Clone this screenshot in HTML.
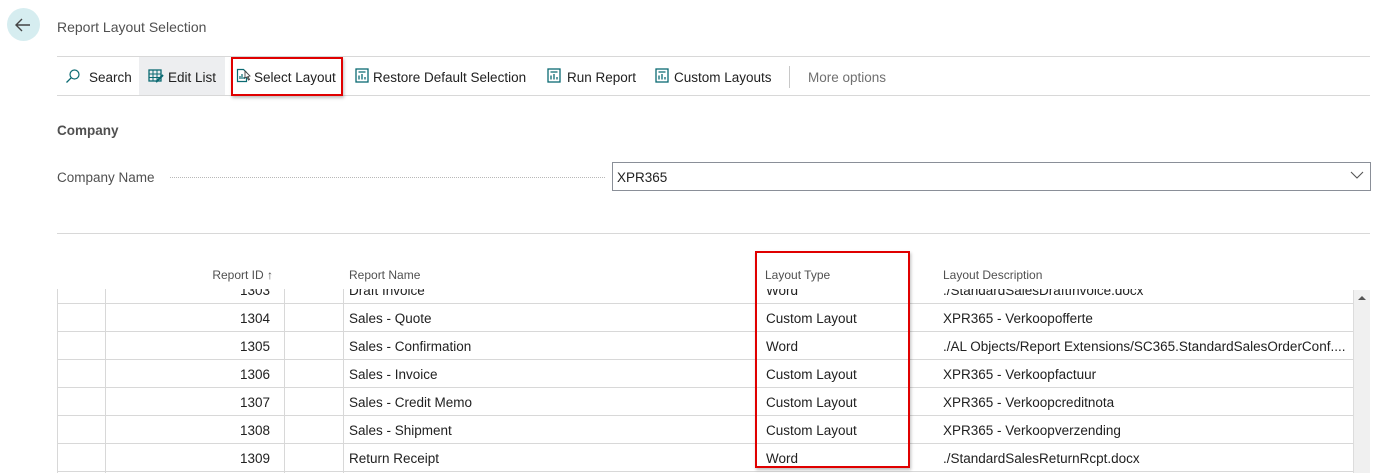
<!DOCTYPE html>
<html><head><meta charset="utf-8">
<style>
*{margin:0;padding:0;box-sizing:border-box}
body{width:1385px;height:473px;overflow:hidden;background:#fff;font-family:"Liberation Sans",sans-serif;color:#212121;position:relative}
.a{position:absolute;white-space:nowrap}
.t{font-size:13.5px;line-height:16px}
.g{color:#505050}
.hl{position:absolute;height:1px;background:#d8d8d8}
.vl{position:absolute;width:1px;background:#d8d8d8}
.red{position:absolute;border:2px solid #e00000;box-shadow:1px 2px 3px rgba(0,0,0,.25)}
svg{position:absolute}
</style></head><body>
<div class="a" style="left:7px;top:8px;width:33px;height:33px;border-radius:50%;background:#d6edf0"></div>
<svg style="left:13px;top:15px" width="20" height="20" viewBox="0 0 20 20"><path d="M17 10H3M9 4L3 10l6 6" fill="none" stroke="#444" stroke-width="1.4"/></svg>
<div class="a t g" style="left:57px;top:19px;font-size:14px">Report Layout Selection</div>
<div class="hl" style="left:57px;top:56px;width:1313px"></div>
<div class="hl" style="left:57px;top:95px;width:1313px"></div>
<div class="a" style="left:139px;top:57px;width:86px;height:38px;background:#edeef0"></div>
<svg style="left:65px;top:68px" width="16" height="16" viewBox="0 0 16 16"><circle cx="9.5" cy="6.5" r="4.5" fill="none" stroke="#0b6a72" stroke-width="1.2"/><path d="M6.3 9.7L1.5 14.5" stroke="#0b6a72" stroke-width="1.3"/></svg>
<div class="a t" style="left:89px;top:70px">Search</div>
<svg style="left:148px;top:68px" width="16" height="16" viewBox="0 0 16 16"><rect x="1" y="2" width="12" height="11" fill="none" stroke="#0b6a72" stroke-width="1.3"/><path d="M1 6h12M1 9.5h12M5 2v11M9 2v11" stroke="#0b6a72" stroke-width="1"/><path d="M8 14l7-7" stroke="#0b6a72" stroke-width="2"/></svg>
<div class="a t" style="left:168px;top:70px">Edit List</div>
<svg style="left:236px;top:67px" width="16" height="17" viewBox="0 0 16 17"><path d="M1.5 2.5h6l3 3v9h-9z" fill="none" stroke="#0b6a72" stroke-width="1.2"/><path d="M4 12V9M6 12V7M8 12v-2" stroke="#0b6a72" stroke-width="1.2"/><path d="M9 4l5 5-2 .5 1.5 3-1 .5-1.5-3L9 11z" fill="#fff" stroke="#444" stroke-width=".9"/></svg>
<div class="a t" style="left:254px;top:70px">Select Layout</div>
<div class="red" style="left:231px;top:57px;width:112px;height:39px"></div>
<svg style="left:355px;top:68px" width="14" height="15" viewBox="0 0 14 15"><rect x="1" y="1" width="12" height="13" fill="none" stroke="#0b6a72" stroke-width="1.3"/><path d="M3.5 4h7M4 11.5V7.5M7 11.5V6M10 11.5V9" stroke="#0b6a72" stroke-width="1.3"/></svg>
<div class="a t" style="left:373px;top:70px">Restore Default Selection</div>
<svg style="left:547px;top:68px" width="14" height="15" viewBox="0 0 14 15"><rect x="1" y="1" width="12" height="13" fill="none" stroke="#0b6a72" stroke-width="1.3"/><path d="M3.5 4h7M4 11.5V7.5M7 11.5V6M10 11.5V9" stroke="#0b6a72" stroke-width="1.3"/></svg>
<div class="a t" style="left:567px;top:70px">Run Report</div>
<svg style="left:655px;top:68px" width="14" height="15" viewBox="0 0 14 15"><rect x="1" y="1" width="12" height="13" fill="none" stroke="#0b6a72" stroke-width="1.3"/><path d="M3.5 4h7M4 11.5V7.5M7 11.5V6M10 11.5V9" stroke="#0b6a72" stroke-width="1.3"/></svg>
<div class="a t" style="left:674px;top:70px">Custom Layouts</div>
<div class="vl" style="left:789px;top:66px;height:22px;background:#c8c8c8"></div>
<div class="a t" style="left:808px;top:70px;color:#707070">More options</div>

<div class="a t g" style="left:57px;top:123px;font-weight:bold;font-weight:600">Company</div>
<div class="a t g" style="left:57px;top:170px">Company Name</div>
<div class="a" style="left:170px;top:177px;width:435px;border-top:1px dotted #b8b8b8"></div>
<div class="a" style="left:612px;top:162px;width:759px;height:29px;border:1px solid #8a8f98"></div>
<div class="a t" style="left:617px;top:170px">XPR365</div>
<svg style="left:1350px;top:170px" width="14" height="10" viewBox="0 0 14 10"><path d="M1 2l6 6 6-6" fill="none" stroke="#555" stroke-width="1.1"/></svg>
<div class="hl" style="left:57px;top:233px;width:1313px"></div>

<div class="a g" style="left:150px;top:268px;width:123px;text-align:right;font-size:12px">Report ID ↑</div>
<div class="a g" style="left:349px;top:268px;font-size:12px">Report Name</div>
<div class="a g" style="left:765px;top:268px;font-size:12px">Layout Type</div>
<div class="a g" style="left:943px;top:268px;font-size:12px">Layout Description</div>

<div style="position:absolute;left:57px;top:289px;width:1297px;height:184px;overflow:hidden">
<div class="vl" style="left:0;top:0;height:184px"></div>
<div class="vl" style="left:48px;top:0;height:184px"></div>
<div class="vl" style="left:227px;top:0;height:184px"></div>
<div class="vl" style="left:286px;top:0;height:184px"></div>
<div style="position:absolute;left:0;top:-13px;width:1297px">
<style>.r{position:relative;height:28px;border-bottom:1px solid #d8d8d8;font-size:13.5px}.r div{position:absolute;top:7px;white-space:nowrap}</style>
<div class="r"><div style="left:90px;width:123px;text-align:right">1303</div><div style="left:292px">Draft Invoice</div><div style="left:709px">Word</div><div style="left:886px">./StandardSalesDraftInvoice.docx</div></div>
<div class="r"><div style="left:90px;width:123px;text-align:right">1304</div><div style="left:292px">Sales - Quote</div><div style="left:709px">Custom Layout</div><div style="left:886px">XPR365 - Verkoopofferte</div></div>
<div class="r"><div style="left:90px;width:123px;text-align:right">1305</div><div style="left:292px">Sales - Confirmation</div><div style="left:709px">Word</div><div style="left:886px">./AL Objects/Report Extensions/SC365.StandardSalesOrderConf....</div></div>
<div class="r"><div style="left:90px;width:123px;text-align:right">1306</div><div style="left:292px">Sales - Invoice</div><div style="left:709px">Custom Layout</div><div style="left:886px">XPR365 - Verkoopfactuur</div></div>
<div class="r"><div style="left:90px;width:123px;text-align:right">1307</div><div style="left:292px">Sales - Credit Memo</div><div style="left:709px">Custom Layout</div><div style="left:886px">XPR365 - Verkoopcreditnota</div></div>
<div class="r"><div style="left:90px;width:123px;text-align:right">1308</div><div style="left:292px">Sales - Shipment</div><div style="left:709px">Custom Layout</div><div style="left:886px">XPR365 - Verkoopverzending</div></div>
<div class="r"><div style="left:90px;width:123px;text-align:right">1309</div><div style="left:292px">Return Receipt</div><div style="left:709px">Word</div><div style="left:886px">./StandardSalesReturnRcpt.docx</div></div>
</div></div>
<div class="a" style="left:1353px;top:290px;width:17px;height:183px;background:#f0f0f0;border-left:1px solid #dcdcdc"></div>
<svg style="left:1357px;top:295px" width="10" height="6" viewBox="0 0 10 6"><path d="M1 5L5 1l4 4z" fill="#555"/></svg>
<div class="red" style="left:755px;top:251px;width:155px;height:217px"></div>
</body></html>
